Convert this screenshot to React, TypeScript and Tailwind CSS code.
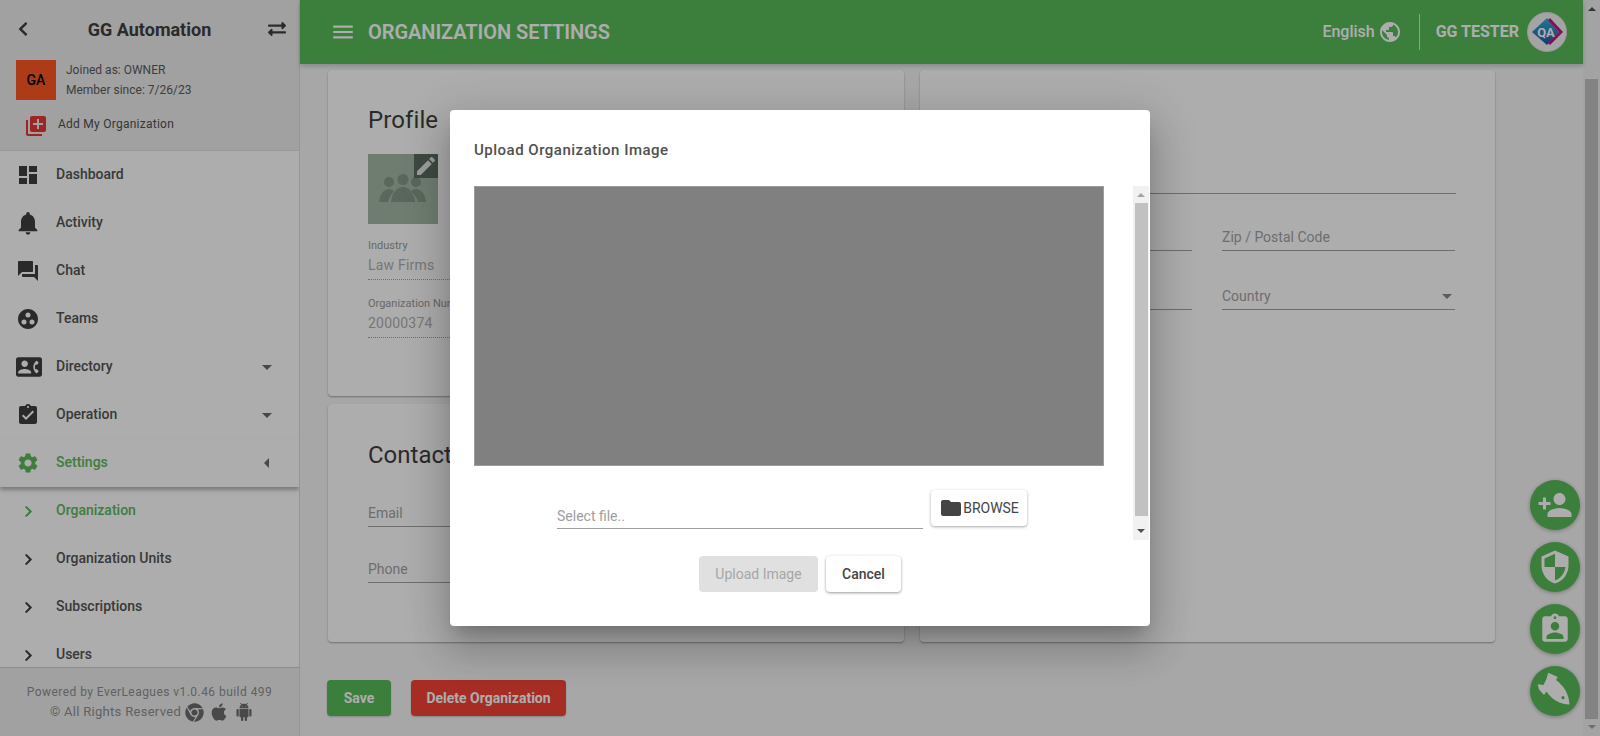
import React from "react";
import {
  MdDashboard, MdNotifications, MdQuestionAnswer, MdGroupWork, MdContactPhone, MdAssignmentTurnedIn, MdSettings,
  MdArrowDropDown, MdArrowLeft, MdLibraryAdd, MdPublic, MdPersonAdd, MdSecurity,
  MdAssignmentInd, MdFolder, MdEdit, MdMenu,
} from "react-icons/md";
import { FaExchangeAlt, FaChrome, FaApple, FaChevronLeft, FaChevronRight } from "react-icons/fa";

const menu = [
  { label: "Dashboard", icon: MdDashboard, cls: "h-[24px] w-[24px]" },
  { label: "Activity", icon: MdNotifications, cls: "h-[28px] w-[28px] -ml-[2px]" },
  { label: "Chat", icon: MdQuestionAnswer, cls: "h-[24px] w-[24px]" },
  { label: "Teams", icon: MdGroupWork, cls: "h-[24px] w-[24px]" },
  { label: "Directory", icon: MdContactPhone, cls: "h-[26px] w-[26px]", caret: true },
  { label: "Operation", icon: MdAssignmentTurnedIn, cls: "h-[24px] w-[24px]", caret: true },
];
const sub = ["Organization", "Organization Units", "Subscriptions", "Users"];

function AndroidIcon() {
  return (
    <svg viewBox="0 0 24 24" className="ml-[6px] h-[18px] w-[18px] text-[#6c6c6c]" fill="currentColor">
      <path d="M6 18c0 .55.45 1 1 1h1v3.5c0 .83.67 1.5 1.5 1.5s1.5-.67 1.5-1.5V19h2v3.5c0 .83.67 1.5 1.5 1.5s1.5-.67 1.5-1.5V19h1c.55 0 1-.45 1-1V8H6v10zM3.5 8C2.67 8 2 8.67 2 9.5v7c0 .83.67 1.5 1.5 1.5S5 17.33 5 16.5v-7C5 8.67 4.33 8 3.5 8zm17 0c-.83 0-1.5.67-1.5 1.5v7c0 .83.67 1.5 1.5 1.5s1.5-.67 1.5-1.5v-7c0-.83-.67-1.5-1.5-1.5zm-4.97-5.84l1.3-1.3c.2-.2.2-.51 0-.71-.2-.2-.51-.2-.71 0l-1.48 1.48C13.85 1.23 12.95 1 12 1c-.96 0-1.86.23-2.66.63L7.85.15c-.2-.2-.51-.2-.71 0-.2.2-.2.51 0 .71l1.31 1.31C6.97 3.26 6 5.01 6 7h12c0-1.99-.97-3.75-2.47-4.84zM10 5H9V4h1v1zm5 0h-1V4h1v1z" />
    </svg>
  );
}

function Sidebar() {
  return (
    <aside className="flex h-[736px] w-[300px] shrink-0 flex-col border-r border-[#dcdcdc] bg-white">
      <div className="h-[151px] shrink-0 border-b border-[#e4e4e4] bg-[#eeeeee] pt-[13px]">
        <div className="flex h-[32px] items-center pl-[15px] pr-[13px]">
          <FaChevronLeft className="h-[16px] w-[16px] text-[#404040]" />
          <div className="flex-1 text-center text-[18px] font-bold text-[#404040]">GG Automation</div>
          <FaExchangeAlt className="h-[18px] w-[18px] text-[#404040]" />
        </div>
        <div className="mt-[15px] flex pl-[16px]">
          <div className="flex h-[40px] w-[40px] items-center justify-center bg-[#ff5722] text-[14px] font-medium text-black">GA</div>
          <div className="ml-[10px] text-[12px] leading-[20px] text-[#5c5c5c]">
            <div>Joined as: OWNER</div>
            <div>Member since: 7/26/23</div>
          </div>
        </div>
        <div className="mt-[14px] flex items-center pl-[24px]">
          <MdLibraryAdd className="h-[24px] w-[24px] text-[#e53935]" />
          <span className="ml-[10px] -mt-[5px] text-[12px] font-normal tracking-[0.25px] text-[#505050]">Add My Organization</span>
        </div>
      </div>
      <div className="min-h-0 flex-1 overflow-hidden">
        {menu.map((m) => (
          <div key={m.label} className="flex h-[48px] items-center pl-[16px] pr-[20px] text-[14px] font-medium text-[#555555]">
            <span className="flex w-[40px] shrink-0 items-center">
              <m.icon className={`${m.cls} text-[#3e3e3e]`} />
            </span>
            <span className="flex-1 pb-[2px]">{m.label}</span>
            {m.caret && <MdArrowDropDown className="h-[24px] w-[24px] text-[#6a6a6a]" />}
          </div>
        ))}
        <div className="relative flex h-[48px] items-center pl-[16px] pr-[20px] text-[14px] font-medium text-[#5cb85c] shadow-[0_3px_4px_rgba(0,0,0,0.3)]">
          <span className="flex w-[40px] shrink-0 items-center">
            <MdSettings className="h-[24px] w-[24px]" />
          </span>
          <span className="flex-1 pb-[2px]">Settings</span>
          <MdArrowLeft className="h-[24px] w-[24px] text-[#6a6a6a]" />
        </div>
        {sub.map((s, i) => (
          <div key={s} className={`flex h-[48px] items-center pl-[16px] text-[14px] font-medium ${i === 0 ? "text-[#5cb85c]" : "text-[#555555]"}`}>
            <span className="flex w-[40px] shrink-0 items-center pl-[6px]">
              <FaChevronRight className={`h-[13px] w-[13px] ${i === 0 ? "text-[#5cb85c]" : "text-[#3e3e3e]"}`} />
            </span>
            <span className="pb-[2px]">{s}</span>
          </div>
        ))}
      </div>
      <div className="h-[69px] shrink-0 border-t border-[#d0d0d0] bg-[#eeeeee] pt-[14px] text-center text-[12px] text-[#8f8f8f]">
        <div className="leading-[20px] tracking-[0.45px]">Powered by EverLeagues v1.0.46 build 499</div>
        <div className="flex h-[20px] items-center justify-center pl-[4px] text-[13px] tracking-[0.3px]">
          <span>© All Rights Reserved</span>
          <FaChrome className="ml-[4px] h-[19px] w-[19px] text-[#6c6c6c]" />
          <FaApple className="ml-[5px] h-[20px] w-[20px] text-[#6c6c6c]" />
          <AndroidIcon />
        </div>
      </div>
    </aside>
  );
}

function QaLogo() {
  return (
    <svg viewBox="0 0 40 40" className="ml-[8px] h-[40px] w-[40px]">
      <defs>
        <linearGradient id="qaLeft" x1="0" y1="0" x2="0" y2="1">
          <stop offset="0" stopColor="#2fb4d8" />
          <stop offset="1" stopColor="#2a50a8" />
        </linearGradient>
      </defs>
      <circle cx="20" cy="20" r="19.5" fill="#f2f2f2" stroke="#dddddd" />
      <path d="M20 6 L5 20 L20 33 L32 20 Z" fill="url(#qaLeft)" />
      <path d="M23 6 L36 20 L23 33 L21 31 L32 20 L21 8 Z" fill="#c2187f" />
      <text x="19" y="24.5" textAnchor="middle" fontSize="13" fontWeight="700" fill="#ffffff" fontFamily="Roboto">QA</text>
    </svg>
  );
}

function Header() {
  return (
    <header className="relative flex h-[64px] shrink-0 items-center bg-[#59bb59] pl-[30px] pr-[16px] text-white shadow-[0_2px_5px_rgba(0,0,0,0.2)]">
      <MdMenu className="h-[26px] w-[26px]" />
      <h1 className="ml-[12px] text-[20px] font-semibold uppercase tracking-[-0.05px]">Organization Settings</h1>
      <div className="ml-auto flex items-center text-[16px] font-medium">
        <span>English</span>
        <MdPublic className="ml-[3px] h-[24px] w-[24px]" />
        <span className="ml-[17px] mr-[16px] h-[36px] w-px bg-white/70" />
        <span className="font-bold">GG TESTER</span>
        <QaLogo />
      </div>
    </header>
  );
}

function Field({ label, className = "", caret }: { label?: string; className?: string; caret?: boolean }) {
  return (
    <div className={`flex h-[30px] items-end justify-between border-b border-[#a3a3a3] pb-[3px] text-[14px] leading-[20px] text-[#a3a3a3] ${className}`}>
      <span>{label}</span>
      {caret && <MdArrowDropDown className="-mb-[2px] -mr-[4px] h-[24px] w-[24px] text-[#888888]" />}
    </div>
  );
}

function ReadOnly({ label, value }: { label: string; value: string }) {
  return (
    <div className="h-[58px]">
      <div className="text-[11px] leading-[14px] text-[#9a9a9a]">{label}</div>
      <div className="mt-[2px] h-[25px] border-b border-dotted border-[#a3a3a3] text-[14px] leading-[20px] tracking-[0.2px] text-[#b0b0b0]">{value}</div>
    </div>
  );
}

function Main() {
  return (
    <main className="flex min-w-0 flex-1 flex-col bg-[#f7f7f7]">
      <Header />
      <div className="pl-[28px] pt-[6px]">
        <div className="flex gap-[16px]">
          <div className="flex w-[576px] flex-col gap-[8px]">
            <section className="h-[326px] rounded-[4px] bg-white px-[40px] pt-[34px] shadow-[0_1px_2px_rgba(0,0,0,0.35)]">
              <h2 className="text-[24px] font-normal leading-[32px] tracking-[0.1px] text-[#3f3f3f]">Profile</h2>
              <div className="relative mt-[18px] h-[70px] w-[70px] bg-[#a2b9a6]">
                <svg viewBox="0 0 70 70" className="h-[70px] w-[70px]" fill="#839888">
                  <circle cx="21" cy="28" r="5" />
                  <circle cx="35" cy="25.5" r="5.5" />
                  <circle cx="48" cy="28" r="5" />
                  <path d="M11 48 C12 40 16 35 21 35 C23 35 25 36 26 37 C23 40 21 44 20 48 Z" />
                  <path d="M23 48 C24 39 29 33 35 33 C41 33 46 39 47 48 Z" />
                  <path d="M58 48 C57 40 53 35 48 35 C46 35 44 36 43 37 C46 40 49 44 50 48 Z" />
                </svg>
                <div className="absolute right-0 top-0 flex h-[24px] w-[24px] items-center justify-center bg-[#5c6c62]">
                  <MdEdit className="h-[24px] w-[24px] text-[#e8e8e8]" />
                </div>
              </div>
              <div className="mt-[15px] flex flex-col">
                <ReadOnly label="Industry" value="Law Firms" />
                <ReadOnly label="Organization Number" value="20000374" />
              </div>
            </section>
            <section className="h-[238px] rounded-[4px] bg-white px-[40px] pt-[34px] shadow-[0_1px_2px_rgba(0,0,0,0.35)]">
              <h2 className="text-[24px] font-normal leading-[34px] text-[#3f3f3f]">Contact</h2>
              <Field label="Email" className="mt-[25px]" />
              <Field label="Phone" className="mt-[26px]" />
            </section>
          </div>
          <section className="h-[572px] w-[575px] rounded-[4px] bg-white px-[39px] pt-[94px] shadow-[0_1px_2px_rgba(0,0,0,0.35)]">
            <Field />
            <div className="mt-[27px] grid grid-cols-[233px_233px] gap-x-[30px] gap-y-[29px]">
              <Field />
              <Field label="Zip / Postal Code" />
              <Field />
              <Field label="Country" caret />
            </div>
          </section>
        </div>
        <div className="mt-[38px] -ml-px flex gap-[20px]">
          <button className="h-[36px] w-[64px] rounded-[4px] bg-[#59bb59] text-[14px] font-bold text-white shadow-[0_1px_2px_rgba(0,0,0,0.2)]">Save</button>
          <button className="h-[36px] w-[155px] rounded-[4px] bg-[#f44336] text-[14px] font-bold text-white shadow-[0_1px_2px_rgba(0,0,0,0.2)]">Delete Organization</button>
        </div>
      </div>
    </main>
  );
}

function PageScrollbar() {
  return (
    <div className="flex h-[736px] w-[17px] shrink-0 flex-col items-center bg-[#f1f1f1]">
      <div className="mt-[7px] h-0 w-0 border-x-[4px] border-b-[4px] border-x-transparent border-b-[#505050]" />
      <div className="mt-[68px] h-[640px] w-[13px] bg-[#c1c1c1]" />
      <div className="mt-[6px] h-0 w-0 border-x-[4px] border-t-[4px] border-x-transparent border-t-[#a3a3a3]" />
    </div>
  );
}

function RocketIcon() {
  return (
    <svg viewBox="0 0 50 50" className="h-[50px] w-[50px]">
      <path d="M18.3 6.7 L27.7 11 L26 14 C34 20 39 28 39.5 38.5 C30 38 22 34 16.5 25.5 L14 29 L9 23.5 L7.7 18.3 L13.5 19 L16 14 Z" fill="currentColor" />
      <circle cx="33" cy="31.7" r="1.6" fill="#59bb59" />
    </svg>
  );
}

function Fabs() {
  const cls = "flex h-[50px] w-[50px] items-center justify-center rounded-full bg-[#59bb59] text-white shadow-[0_1px_4px_rgba(0,0,0,0.3)]";
  return (
    <div className="absolute left-[1530px] top-[480px] flex flex-col gap-[12px]">
      <div className={cls}><MdPersonAdd className="h-[36px] w-[36px]" /></div>
      <div className={cls}><MdSecurity className="h-[36px] w-[36px]" /></div>
      <div className={cls}><MdAssignmentInd className="h-[34px] w-[34px]" /></div>
      <div className={cls}><RocketIcon /></div>
    </div>
  );
}

function Modal() {
  return (
    <div className="absolute inset-0 z-20 bg-black/[0.32] pl-[450px] pt-[110px]">
      <div className="h-[516px] w-[700px] rounded-[4px] bg-white pl-[24px] pt-[29px] shadow-[0_11px_15px_-7px_rgba(0,0,0,0.2),0_24px_38px_3px_rgba(0,0,0,0.14),0_9px_46px_8px_rgba(0,0,0,0.12)]">
        <h3 className="text-[15px] font-medium leading-[22px] tracking-[0.5px] text-[#505050]">Upload Organization Image</h3>
        <div className="mt-[25px] flex h-[354px]">
          <div className="w-[630px]">
            <div className="h-[280px] w-full border border-[#9c9c9c] bg-[#808080]" />
            <div className="mt-[24px] flex h-[39px] pl-[83px]">
              <div className="flex h-[39px] w-[366px] items-end border-b border-[#9e9e9e] pb-[2px] text-[14px] leading-[20px] text-[#9e9e9e]">Select file..</div>
              <button className="ml-[8px] flex h-[36px] w-[96px] items-center justify-center rounded-[4px] bg-white text-[14px] text-[#444444] shadow-[0_1px_3px_rgba(0,0,0,0.35)]">
                <MdFolder className="h-[24px] w-[24px] text-[#444444]" />
                BROWSE
              </button>
            </div>
          </div>
          <div className="ml-[29px] flex h-[354px] w-[16px] flex-col items-center bg-[#f1f1f1]">
            <div className="mt-[7px] h-0 w-0 border-x-[4px] border-b-[4px] border-x-transparent border-b-[#a3a3a3]" />
            <div className="mt-[6px] h-[313px] w-[13px] bg-[#c1c1c1]" />
            <div className="mt-[13px] h-0 w-0 border-x-[4px] border-t-[4px] border-x-transparent border-t-[#505050]" />
          </div>
        </div>
        <div className="mt-[16px] -ml-[24px] flex justify-center gap-[8px]">
          <button className="h-[36px] w-[119px] rounded-[4px] bg-[#e0e0e0] text-[14px] text-[#a6a6a6]">Upload Image</button>
          <button className="h-[36px] w-[75px] rounded-[4px] bg-white text-[14px] font-medium text-[#444444] shadow-[0_1px_3px_rgba(0,0,0,0.4)]">Cancel</button>
        </div>
      </div>
    </div>
  );
}

export default function App() {
  return (
    <div className="relative flex h-[736px] w-[1600px] overflow-hidden font-['Roboto',sans-serif]">
      <Sidebar />
      <Main />
      <PageScrollbar />
      <Fabs />
      <Modal />
    </div>
  );
}
